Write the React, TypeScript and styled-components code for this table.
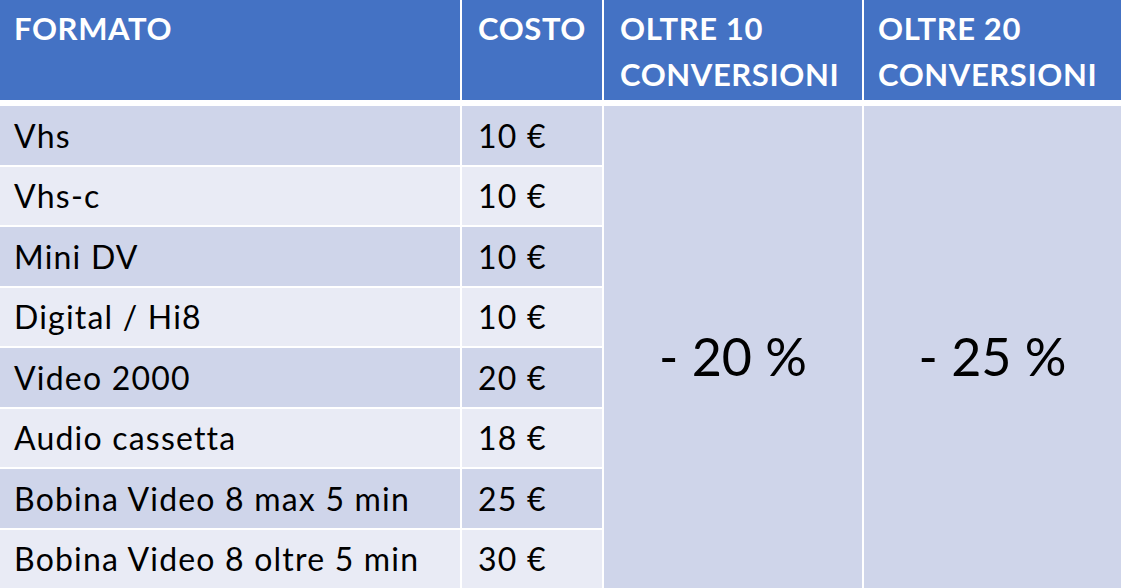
import styled, { createGlobalStyle } from "styled-components";

const GlobalStyle = createGlobalStyle`
  html, body {
    margin: 0;
    padding: 0;
    background: #ffffff;
  }
  body {
    font-family: Lato, "Open Sans", "Liberation Sans", sans-serif;
    overflow: hidden;
  }
`;

const COLUMNS = "460px 140px 258px 1fr";

const Table = styled.div`
  width: 1121px;
  height: 588px;
  display: flex;
  flex-direction: column;
  gap: 6px;
  background: #ffffff;
`;

const HeaderRow = styled.div`
  display: grid;
  grid-template-columns: ${COLUMNS};
  column-gap: 2px;
  height: 100px;
`;

const HeaderCell = styled.div<{ $pad?: number }>`
  background: #4472c4;
  color: #ffffff;
  font-weight: 700;
  font-size: 31px;
  line-height: 46px;
  padding: 5px 0 0 ${(p) => p.$pad ?? 15}px;
  white-space: nowrap;
  letter-spacing: 0.6px;
`;

const Body = styled.div`
  display: grid;
  grid-template-columns: ${COLUMNS};
  grid-template-rows: repeat(8, 1fr);
  gap: 2px;
  flex: 1;
`;

const Cell = styled.div<{ $alt: boolean; $col: number; $pad?: number }>`
  grid-column: ${(p) => p.$col};
  background: ${(p) => (p.$alt ? "#e9ebf5" : "#cfd5ea")};
  display: flex;
  align-items: center;
  padding-left: ${(p) => p.$pad ?? 15}px;
  font-size: 32px;
  color: #000000;
  white-space: nowrap;
  letter-spacing: 1.2px;
`;

const Discount = styled.div<{ $col: number }>`
  grid-column: ${(p) => p.$col};
  grid-row: 1 / -1;
  background: #cfd5ea;
  display: flex;
  align-items: center;
  justify-content: center;
  padding-top: 18px;
  font-size: 52px;
  color: #000000;
  white-space: pre;
`;

const rows = [
  { name: "Vhs", cost: "10 €" },
  { name: "Vhs-c", cost: "10 €" },
  { name: "Mini DV", cost: "10 €" },
  { name: "Digital / Hi8", cost: "10 €" },
  { name: "Video 2000", cost: "20 €" },
  { name: "Audio cassetta", cost: "18 €" },
  { name: "Bobina Video 8 max 5 min", cost: "25 €" },
  { name: "Bobina Video 8 oltre 5 min", cost: "30 €" },
];

export default function App() {
  return (
    <>
      <GlobalStyle />
      <Table>
        <HeaderRow>
          <HeaderCell $pad={14}>FORMATO</HeaderCell>
          <HeaderCell $pad={16}>COSTO</HeaderCell>
          <HeaderCell $pad={16}>
            OLTRE 10
            <br />
            CONVERSIONI
          </HeaderCell>
          <HeaderCell $pad={14}>
            OLTRE 20
            <br />
            CONVERSIONI
          </HeaderCell>
        </HeaderRow>
        <Body>
          {rows.map((r, i) => (
            <Cell key={"n" + i} $alt={i % 2 === 1} $col={1} $pad={14} style={{ gridRow: i + 1 }}>
              {r.name}
            </Cell>
          ))}
          {rows.map((r, i) => (
            <Cell key={"c" + i} $alt={i % 2 === 1} $col={2} $pad={16} style={{ gridRow: i + 1 }}>
              {r.cost}
            </Cell>
          ))}
          <Discount $col={3}>- 20 %</Discount>
          <Discount $col={4}>- 25 %</Discount>
        </Body>
      </Table>
    </>
  );
}
